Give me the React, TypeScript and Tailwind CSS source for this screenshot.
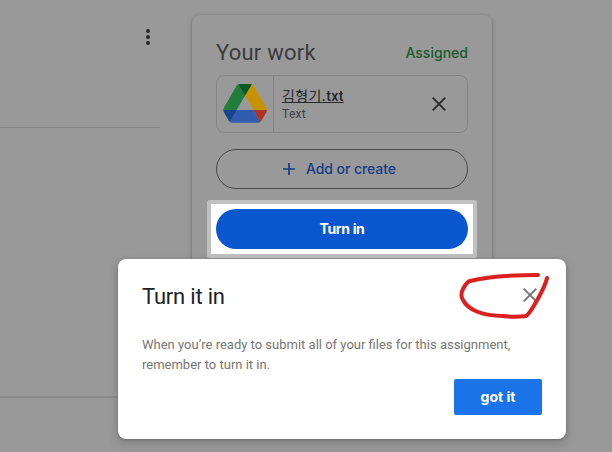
function DriveLogo() {
  return (
    <svg width="44" height="40" viewBox="0 0 44 40" className="shrink-0">
      <path d="M.3 26Q.3 24.700 1 23.500L13.700 1.600Q14.200.8 15 .300L22.100 11.800 13.800 26Z" fill="#227c3b" />
      <path d="M15 .3Q16 0 17.300 0H26.900Q28.200 0 29.200.3L22.100 11.800Z" fill="#0b5a26" />
      <path d="M29.200.3Q30 .8 30.500 1.600L43.200 23.500Q43.900 24.700 43.900 26H30.500L22.100 11.800Z" fill="#c89303" />
      <path d="M13.800 26H30.500L37.100 38Q36.200 38.700 34.800 38.700H9.400Q8 38.700 7.100 38Z" fill="#2f5cb0" />
      <path d="M.3 26H13.800L7.100 38Q6.300 37.500 5.700 36.600L1 28.500Q.3 27.300.3 26Z" fill="#16458c" />
      <path d="M30.500 26H43.900Q43.900 27.300 43.200 28.500L38.500 36.600Q37.900 37.500 37.100 38Z" fill="#ae3325" />
      <path d="M22.100 11.800 13.800 26H30.500Z" fill="#999" />
    </svg>
  );
}

function Cross({ className }: { className: string }) {
  return (
    <svg viewBox="0 0 14 14" className={className} fill="none" stroke="currentColor" strokeWidth="1.9">
      <path d="M.7.7 13.300 13.300M13.300.7.7 13.300" />
    </svg>
  );
}

function WorkCard() {
  return (
    <section className="mt-[15px] ml-8 h-[268px] w-[300px] rounded-lg bg-[#999] px-6 pt-6 shadow-[0_1px_2px_rgba(0,0,0,0.24),0_1px_4px_1px_rgba(0,0,0,0.12)]">
      <header className="flex h-[36px] items-start justify-between whitespace-nowrap">
        <h2 className="font-['Roboto'] text-[22px] leading-[28px] tracking-[0.22px] text-[#3a3b3c]">Your work</h2>
        <span className="mt-1 font-['Inter'] text-[14px] font-medium leading-5 tracking-[0.02px] text-[#1b592b]">Assigned</span>
      </header>
      <div className="flex h-[58px] items-center overflow-hidden rounded-lg border border-[#838486]">
        <div className="flex h-full w-[57px] shrink-0 items-center justify-center border-r border-[#838486]">
          <DriveLogo />
        </div>
        <div className="flex grow flex-col items-start pl-2 whitespace-nowrap">
          <a className="font-['Roboto','Noto_Sans_CJK_KR',sans-serif] text-[14px] font-medium leading-[20px] tracking-[0.4px] text-[#252627] underline"><span className="font-normal">김형기</span>.txt</a>
          <span className="font-['Roboto'] text-[12px] leading-4 tracking-[0.3px] text-[#3b3d40]">Text</span>
        </div>
        <Cross className="mr-[21px] size-[14px] text-[#292a2b]" />
      </div>
      <button className="mt-4 flex h-10 w-full items-center justify-center gap-[11px] rounded-full border border-[#47494a] pr-[5px] pb-px font-['Inter'] text-[14px] font-medium tracking-[-0.07px] text-[#173d85]">
        <svg width="12" height="12" viewBox="0 0 12 12" stroke="currentColor" strokeWidth="1.700"><path d="M6 0V12M0 6H12" /></svg>
        Add or create
      </button>
      <div className="-mx-[9px] mt-[11px] h-[58px] rounded-[3px] bg-[#c0c0c0] p-1">
        <div className="h-full bg-white p-[5px]">
          <button className="flex h-10 w-full items-center justify-center rounded-full bg-[#0b57d0] pb-0.5 font-['Inter'] text-[14px] font-bold tracking-[-0.35px] text-white">Turn in</button>
        </div>
      </div>
    </section>
  );
}

export default function App() {
  return (
    <main className="relative flex h-[452px] w-[612px] overflow-hidden bg-[#999]">
      <aside className="flex w-40 shrink-0 flex-col">
        <div className="flex h-[128px] justify-end border-b border-[#858688] pt-[29px] pr-[10px]">
          <svg width="4" height="16" viewBox="0 0 4 16" fill="#252627"><circle cx="2" cy="2" r="2" /><circle cx="2" cy="8" r="2" /><circle cx="2" cy="14" r="2" /></svg>
        </div>
        <div className="h-[270px] border-b-2 border-[#8b8b8c]" />
      </aside>
      <WorkCard />
      <div role="dialog" className="absolute left-[118px] top-[259px] h-[180px] w-[448px] rounded-lg bg-white px-6 pt-6 shadow-[0_1px_3px_rgba(0,0,0,0.24),0_4px_8px_3px_rgba(0,0,0,0.1)]">
        <header className="flex justify-between">
          <h2 className="font-['Roboto'] text-[22px] leading-7 tracking-[-0.2px] text-[#202124]">Turn it in</h2>
          <Cross className="mt-[5px] mr-[5px] size-[14px] text-[#757575]" />
        </header>
        <p className="mt-[24px] font-['Roboto'] text-[13px] leading-5 whitespace-nowrap text-[#757575]">
          When you’re ready to submit all of your files for this assignment,<br />remember to turn it in.
        </p>
        <div className="mt-1 flex justify-end">
          <button className="h-9 w-[88px] rounded-[2px] bg-[#1a73e8] pb-0.5 font-['Inter'] text-[14px] font-bold text-white">got it</button>
        </div>
        <svg className="pointer-events-none absolute left-[340px] top-[12px]" width="94" height="50" viewBox="0 0 94 50" fill="none" stroke="#dc1f1f" strokeWidth="4" strokeLinecap="round" strokeLinejoin="round">
          <path d="M80 4C57 4 32 5 12 10C9 11 7 14 5 18C3 22 3 26 5 29C10 39 25 45 45 45C53 46 60 46 68 45C72 43 87 17 89 7" />
        </svg>
      </div>
    </main>
  );
}
